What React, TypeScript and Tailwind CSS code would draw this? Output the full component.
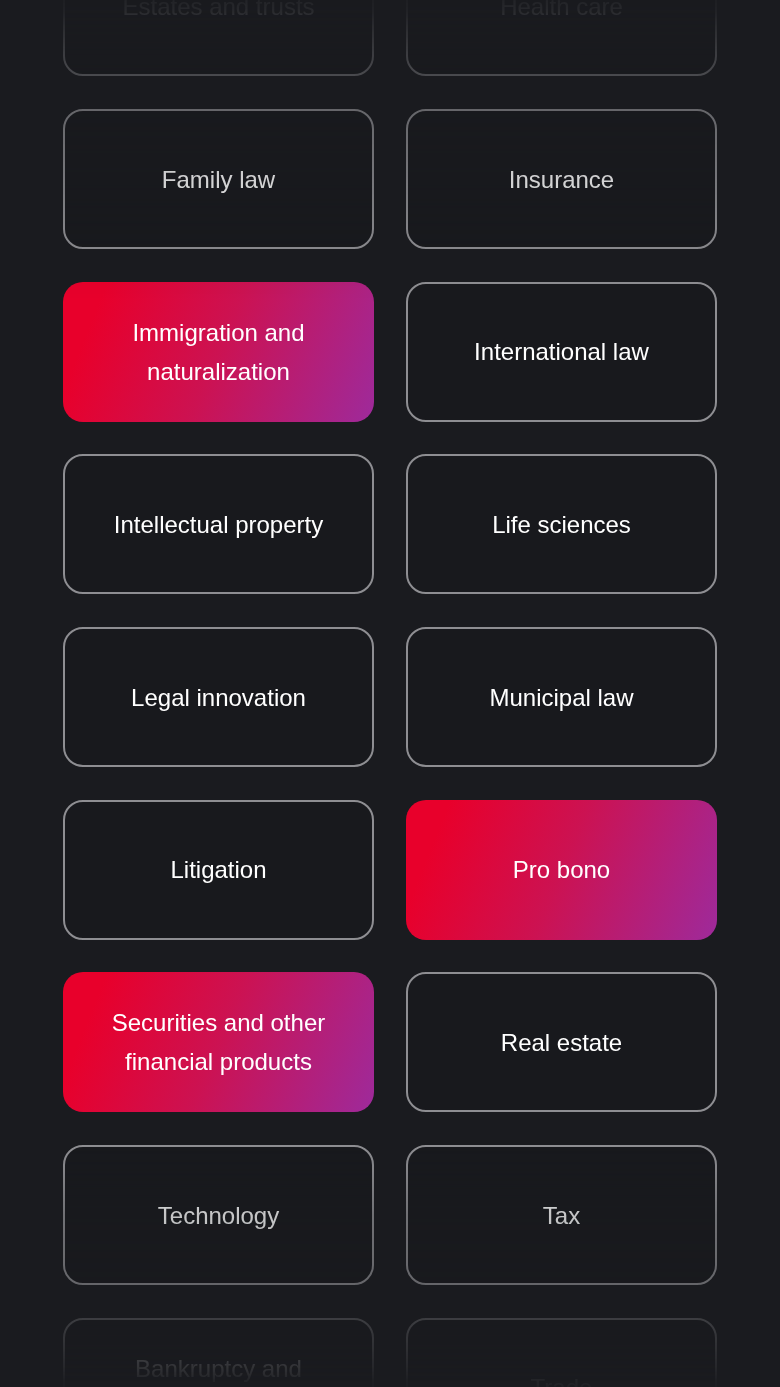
const areas: { label: string; active?: boolean }[] = [
  { label: "Estates and trusts" },
  { label: "Health care" },
  { label: "Family law" },
  { label: "Insurance" },
  { label: "Immigration and naturalization", active: true },
  { label: "International law" },
  { label: "Intellectual property" },
  { label: "Life sciences" },
  { label: "Legal innovation" },
  { label: "Municipal law" },
  { label: "Litigation" },
  { label: "Pro bono", active: true },
  { label: "Securities and other financial products", active: true },
  { label: "Real estate" },
  { label: "Technology" },
  { label: "Tax" },
  { label: "Bankruptcy and restructuring" },
  { label: "Trade" },
];

function AreaCard({ label, active }: { label: string; active?: boolean }) {
  return (
    <button
      className={
        active
          ? "h-[140px] rounded-[20px] bg-[linear-gradient(112deg,#e8002b_12%,#cc1252_50%,#9e2a9b_100%)] flex items-center justify-center px-8 text-center"
          : "h-[140px] rounded-[20px] border-2 border-[#8e8e92] bg-[#18191d] flex items-center justify-center px-8 text-center"
      }
    >
      <span className="text-white text-[24px] leading-[39px] font-normal">{label}</span>
    </button>
  );
}

export default function App() {
  return (
    <div
      className="w-[780px] h-[1387px] overflow-hidden bg-[#1a1b1f]"
      style={{ fontFamily: '"Liberation Sans", Arial, sans-serif' }}
    >
      {/* list fades out at top and bottom (box starts 64px above the page because the grid margin collapses) */}
      <div className="[mask-image:linear-gradient(to_bottom,rgba(0,0,0,0.04)_64px,rgba(0,0,0,0.06)_74px,rgba(0,0,0,0.41)_140px,rgba(0,0,0,0.65)_173px,rgba(0,0,0,0.8)_244px,rgba(0,0,0,0.95)_313px,#000_364px,#000_1209px,rgba(0,0,0,0.75)_1279px,rgba(0,0,0,0.65)_1348px,rgba(0,0,0,0.3)_1382px,rgba(0,0,0,0.1)_1432px,rgba(0,0,0,0.03)_1446px,rgba(0,0,0,0.02)_1464px)]">
        <div className="-mt-[63.7px] px-[63px] grid grid-cols-2 gap-x-[32px] gap-y-[32.7px]">
          {areas.map((a) => (
            <AreaCard key={a.label} label={a.label} active={a.active} />
          ))}
        </div>
      </div>
    </div>
  );
}
